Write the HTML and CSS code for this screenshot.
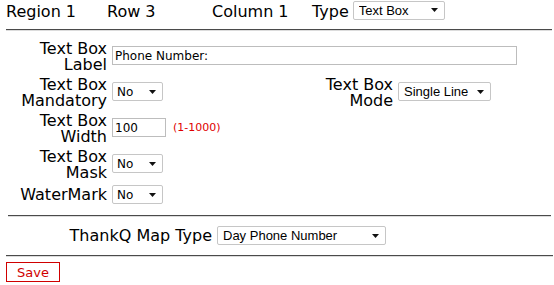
FILE: index.html
```html
<!DOCTYPE html>
<html lang="en">
<head>
  <meta charset="UTF-8">
  <title>Field Settings</title>
  <link rel="stylesheet" href="styles.css">
</head>
<body>

<div class="head">
  <span class="cell cell-region">Region 1</span>
  <span class="cell cell-row">Row 3</span>
  <span class="cell cell-col">Column 1</span>
  <span class="type-label">Type</span>
  <select class="sel sans sel-type">
    <option>Text Box</option>
  </select>
</div>

<hr class="rule rule-top">

<div class="fields">
  <label class="lbl">Text Box<br>Label</label>
  <input type="text" class="txt txt-label span-all" value="Phone Number:">

  <label class="lbl">Text Box<br>Mandatory</label>
  <select class="sel sel-no"><option>No</option></select>
  <label class="lbl">Text Box<br>Mode</label>
  <select class="sel sans sel-mode"><option>Single Line</option></select>

  <label class="lbl">Text Box<br>Width</label>
  <div class="span-all inline">
    <input type="text" class="txt txt-width" value="100">
    <span class="hint">(1-1000)</span>
  </div>

  <label class="lbl">Text Box<br>Mask</label>
  <select class="sel sel-no span-all"><option>No</option></select>

  <label class="lbl one-line">WaterMark</label>
  <select class="sel sel-no span-all"><option>No</option></select>
</div>

<hr class="rule rule-mid">

<div class="map-row">
  <label class="map-label">ThankQ Map Type</label>
  <select class="sel sans sel-map"><option>Day Phone Number</option></select>
</div>

<hr class="rule rule-bottom">

<button class="save">Save</button>

</body>
</html>
```

FILE: styles.css
```css
body {
  font-family: 'DejaVu Sans', Verdana, sans-serif;
  margin: 0;
  background-color: #fff;
  color: #000;
  font-size: 16px;
  line-height: 16px;
}
.head {
  display: flex;
  align-items: center;
  padding: 2px 0 0 6px;
  height: 19px;
}
.cell {
  display: inline-block;
}
.cell-region {
  width: 101px;
}
.cell-row {
  width: 105px;
}
.cell-col {
  width: 100px;
}
.type-label {
  margin-right: 4px;
}
.rule {
  height: 0;
  border: none;
  border-top: 1px solid #4a4a4a;
  border-bottom: 1px solid #dcdcdc;
  padding: 0;
}
.rule-top {
  margin: 8px 2px 10px 6px;
}
.rule-mid {
  margin: 8px 3px 0 8px;
}
.rule-bottom {
  margin: 10px 1px 0 6px;
}
.fields {
  display: grid;
  grid-template-columns: 101px 190px 86px auto;
  column-gap: 5px;
  row-gap: 4px;
  align-items: center;
  padding-left: 6px;
}
.lbl {
  text-align: right;
}
.one-line {
  margin-bottom: 3px;
}
.span-all {
  grid-column: 2 / 5;
  justify-self: start;
}
.inline {
  display: flex;
  align-items: center;
  margin-bottom: 3px;
}
.txt, .sel {
  box-sizing: border-box;
  height: 19px;
  margin: 0 0 3px 0;
  border: 1px solid #bdbdbd;
  background-color: #fff;
  color: #000;
  font-family: 'DejaVu Sans', Verdana, sans-serif;
  font-size: 12px;
}
.txt {
  padding: 0 2px;
}
.inline .txt {
  margin: 0;
}
.txt-label {
  width: 405px;
}
.txt-width {
  width: 54px;
}
.hint {
  color: #e00000;
  font-size: 11px;
  margin-left: 7px;
}
.sel {
  -webkit-appearance: none;
  appearance: none;
  border-radius: 2px;
  border-color: #c6c6c6;
  padding: 0 14px 0 4px;
  background-image: url("data:image/svg+xml,%3Csvg xmlns='http://www.w3.org/2000/svg' width='7' height='4'%3E%3Cpath d='M0 0H7L3.5 4Z' fill='%23111'/%3E%3C/svg%3E");
  background-repeat: no-repeat;
  background-position: right 6px center;
}
.sans {
  font-family: 'Liberation Sans', Arial, sans-serif;
  font-size: 13px;
  padding-left: 5px;
}
.sel-type {
  width: 92px;
}
.sel-no {
  width: 51px;
}
.sel-mode {
  width: 93px;
}
.map-row {
  display: flex;
  align-items: center;
  gap: 5px;
  margin-top: 9px;
  height: 19px;
}
.map-label {
  width: 212px;
  text-align: right;
}
.sel-map {
  width: 169px;
  margin: 0;
}
.save {
  display: block;
  margin: 5px 0 0 6px;
  width: 54px;
  height: 20px;
  padding: 0;
  border: 1px solid #d00000;
  background-color: #fff;
  color: #d00000;
  font-family: 'DejaVu Sans', Verdana, sans-serif;
  font-size: 13px;
}
```
